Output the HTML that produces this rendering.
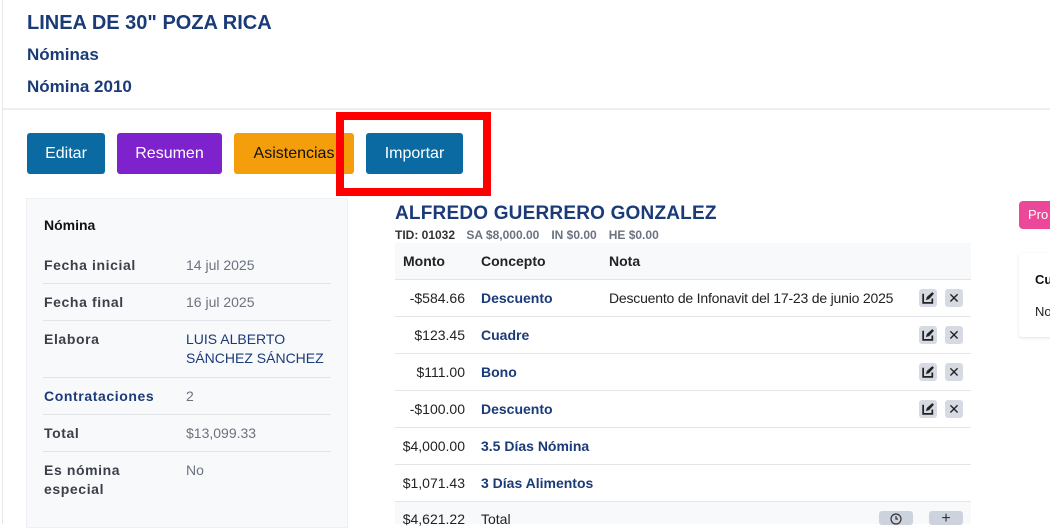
<!DOCTYPE html>
<html><head><meta charset="utf-8"><style>
*{margin:0;padding:0;box-sizing:border-box}
body{width:1050px;height:524px;overflow:hidden;background:#fff;font-family:"Liberation Sans",sans-serif;position:relative}
.a{position:absolute}
.h{color:#1a3a78;font-weight:bold;left:27px}
.btn{position:absolute;top:133px;height:41px;border-radius:3px;color:#fff;font-size:16px;line-height:41px;text-align:center}
.lab{position:absolute;left:44px;font-size:14px;font-weight:bold;color:#3a3f4a;letter-spacing:.6px;line-height:19px}
.val{position:absolute;left:186px;font-size:14px;color:#6b7280;line-height:19px}
.ln{position:absolute;left:43px;width:288px;height:1px;background:#e3e5e8}
.tl{position:absolute;left:395px;width:576px;height:1px;background:#e3e5e8}
.m{position:absolute;right:585px;font-size:14px;color:#222;text-align:right}
.c{position:absolute;left:481px;font-size:14px;color:#1a3a78;font-weight:bold}
.ib{position:absolute;width:18px;height:18px;background:#d6dbe3;border-radius:3px;font-size:14px;text-align:center;line-height:18px;color:#222}
</style></head><body>
<div class="a" style="left:2px;top:0;width:1px;height:524px;background:#e5e7eb"></div>
<div class="a h" style="top:12px;font-size:20px">LINEA DE 30" POZA RICA</div>
<div class="a h" style="top:45px;font-size:17px">Nóminas</div>
<div class="a h" style="top:77px;font-size:17px">Nómina 2010</div>
<div class="a" style="left:3px;top:108px;width:1047px;height:2px;background:#eceef1"></div>
<div class="btn" style="left:27px;width:78px;background:#0b6aa2">Editar</div>
<div class="btn" style="left:117px;width:105px;background:#7e22ce">Resumen</div>
<div class="btn" style="left:234px;width:120px;background:#f59e0b;color:#111">Asistencias</div>
<div class="btn" style="left:366px;width:97px;background:#0b6aa2">Importar</div>
<div class="a" style="left:336px;top:112px;width:155px;height:84px;border:8px solid #ff0000"></div>

<div class="a" style="left:26px;top:198px;width:322px;height:330px;background:#f8f9fb;border:1px solid #eef0f3"></div>
<div class="a" style="left:44px;top:217px;font-size:14px;font-weight:bold;color:#111">Nómina</div>
<div class="lab" style="top:256px">Fecha inicial</div><div class="val" style="top:256px">14 jul 2025</div>
<div class="ln" style="top:283px"></div>
<div class="lab" style="top:293px">Fecha final</div><div class="val" style="top:293px">16 jul 2025</div>
<div class="ln" style="top:320px"></div>
<div class="lab" style="top:330px">Elabora</div><div class="val" style="top:330px;color:#1a3a78">LUIS ALBERTO<br>SÁNCHEZ SÁNCHEZ</div>
<div class="ln" style="top:377px"></div>
<div class="lab" style="top:387px;color:#1a3a78">Contrataciones</div><div class="val" style="top:387px">2</div>
<div class="ln" style="top:414px"></div>
<div class="lab" style="top:424px">Total</div><div class="val" style="top:424px">$13,099.33</div>
<div class="ln" style="top:451px"></div>
<div class="lab" style="top:461px">Es nómina<br>especial</div><div class="val" style="top:461px">No</div>

<div class="a" style="left:395px;top:203px;font-size:19px;font-weight:bold;color:#1a3a78;letter-spacing:.2px">ALFREDO GUERRERO GONZALEZ</div>
<div class="a" style="left:395px;top:228px;font-size:12px;font-weight:bold;color:#333">TID: 01032 <span style="color:#6b7280;margin-left:8px">SA $8,000.00</span><span style="color:#6b7280;margin-left:12px">IN $0.00</span><span style="color:#6b7280;margin-left:12px">HE $0.00</span></div>
<div class="a" style="left:395px;top:243px;width:576px;height:36px;background:#f8f9fa"></div>
<div class="a" style="left:403px;top:253px;font-size:14px;font-weight:bold;color:#222">Monto</div>
<div class="a" style="left:481px;top:253px;font-size:14px;font-weight:bold;color:#222">Concepto</div>
<div class="a" style="left:609px;top:253px;font-size:14px;font-weight:bold;color:#222">Nota</div>
<div class="tl" style="top:279px"></div><div class="tl" style="top:316px"></div><div class="tl" style="top:353px"></div><div class="tl" style="top:390px"></div><div class="tl" style="top:427px"></div><div class="tl" style="top:464px"></div><div class="tl" style="top:501px"></div>
<div class="a" style="left:395px;top:502px;width:576px;height:22px;background:#f8f9fa"></div>

<div class="m" style="top:290px">-$584.66</div><div class="c" style="top:290px">Descuento</div>
<div class="a" style="left:609px;top:290px;font-size:14px;color:#222;letter-spacing:-.2px">Descuento de Infonavit del 17-23 de junio 2025</div>
<div class="m" style="top:327px">$123.45</div><div class="c" style="top:327px">Cuadre</div>
<div class="m" style="top:364px">$111.00</div><div class="c" style="top:364px">Bono</div>
<div class="m" style="top:401px">-$100.00</div><div class="c" style="top:401px">Descuento</div>
<div class="m" style="top:438px">$4,000.00</div><div class="c" style="top:438px">3.5 Días Nómina</div>
<div class="m" style="top:475px">$1,071.43</div><div class="c" style="top:475px">3 Días Alimentos</div>
<div class="m" style="top:511px">$4,621.22</div><div class="a" style="left:481px;top:511px;font-size:14px;color:#222">Total</div>

<div class="ib" style="left:919px;top:289px"><svg width="14" height="14" viewBox="0 0 13 13" style="margin-top:2px"><path d="M2 2.5v8.5h8.5V7" fill="none" stroke="#222" stroke-width="1.6"/><path d="M4.5 8.5l1-3 5-4.5 1.5 1.5-4.5 5z" fill="#222"/></svg></div><div class="ib" style="left:945px;top:289px">✕</div>
<div class="ib" style="left:919px;top:326px"><svg width="14" height="14" viewBox="0 0 13 13" style="margin-top:2px"><path d="M2 2.5v8.5h8.5V7" fill="none" stroke="#222" stroke-width="1.6"/><path d="M4.5 8.5l1-3 5-4.5 1.5 1.5-4.5 5z" fill="#222"/></svg></div><div class="ib" style="left:945px;top:326px">✕</div>
<div class="ib" style="left:919px;top:363px"><svg width="14" height="14" viewBox="0 0 13 13" style="margin-top:2px"><path d="M2 2.5v8.5h8.5V7" fill="none" stroke="#222" stroke-width="1.6"/><path d="M4.5 8.5l1-3 5-4.5 1.5 1.5-4.5 5z" fill="#222"/></svg></div><div class="ib" style="left:945px;top:363px">✕</div>
<div class="ib" style="left:919px;top:400px"><svg width="14" height="14" viewBox="0 0 13 13" style="margin-top:2px"><path d="M2 2.5v8.5h8.5V7" fill="none" stroke="#222" stroke-width="1.6"/><path d="M4.5 8.5l1-3 5-4.5 1.5 1.5-4.5 5z" fill="#222"/></svg></div><div class="ib" style="left:945px;top:400px">✕</div>
<div class="a" style="left:879px;top:511px;width:34px;height:14px;background:#cdd3dc;border-radius:3px"><svg width="14" height="14" viewBox="0 0 14 14" style="margin:1px 10px"><circle cx="7" cy="7" r="5" fill="none" stroke="#333" stroke-width="1.2"/><path d="M7 4v3h2" fill="none" stroke="#333" stroke-width="1.2"/></svg></div>
<div class="a" style="left:929px;top:511px;width:34px;height:14px;background:#cdd3dc;border-radius:3px;text-align:center;font-size:16px;line-height:16px;color:#333">+</div>

<div class="a" style="left:1019px;top:201px;width:40px;height:28px;background:#ec4899;border-radius:4px;color:#fff;font-size:13px;line-height:28px;padding-left:9px">Pro</div>
<div class="a" style="left:1019px;top:253px;width:40px;height:84px;background:#fff;box-shadow:0 1px 3px rgba(0,0,0,.12);border-radius:3px"></div>
<div class="a" style="left:1035px;top:272px;font-size:13px;font-weight:bold;color:#111">Cu</div>
<div class="a" style="left:1035px;top:304px;font-size:13px;color:#222">No</div>
</body></html>
